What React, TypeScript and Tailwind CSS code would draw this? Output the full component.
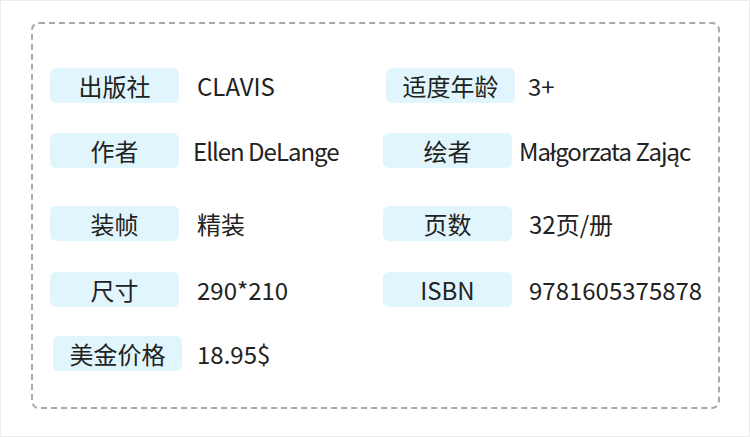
const rows = [
  {
    top: 'mt-[44px]',
    left: { label: '出版社', value: 'CLAVIS', labelPos: '', gap: 'ml-[18px]', track: '' },
    right: { label: '适度年龄', value: '3+', labelPos: 'ml-[3px]', gap: 'ml-[13px]', track: '' },
  },
  {
    top: 'mt-[30px]',
    left: { label: '作者', value: 'Ellen DeLange', labelPos: '', gap: 'ml-[14px]', track: 'tracking-[-1px]' },
    right: { label: '绘者', value: 'Małgorzata Zając', labelPos: '', gap: 'ml-[7px]', track: 'tracking-[-1px]' },
  },
  {
    top: 'mt-[38px]',
    left: { label: '装帧', value: '精装', labelPos: '', gap: 'ml-[18px]', track: '' },
    right: { label: '页数', value: '32页/册', labelPos: '', gap: 'ml-[17px]', track: '' },
  },
  {
    top: 'mt-[31px]',
    left: { label: '尺寸', value: '290*210', labelPos: '', gap: 'ml-[18px]', track: '' },
    right: { label: 'ISBN', value: '9781605375878', labelPos: '', gap: 'ml-[17px]', track: '' },
  },
  {
    top: 'mt-[29px]',
    left: { label: '美金价格', value: '18.95$', labelPos: 'ml-[3px]', gap: 'ml-[15px]', track: '' },
    right: null,
  },
];

type Cell = { label: string; value: string; labelPos: string; gap: string; track: string };

const Field = ({ cell }: { cell: Cell }) => (
  <div className="flex items-center">
    <div
      className={`${cell.labelPos} w-[129px] h-[35px] shrink-0 rounded-md bg-[#e1f6fc] flex items-center justify-center text-[24px] leading-none text-[#222]`}
    >
      {cell.label}
    </div>
    <div className={`${cell.gap} ${cell.track} text-[24px] leading-none text-[#222] whitespace-nowrap`}>
      {cell.value}
    </div>
  </div>
);

export default function App() {
  return (
    <div
      className="w-[750px] h-[437px] bg-white border border-[#ececec] overflow-hidden"
      style={{ fontFamily: '"Noto Sans CJK SC", "Noto Sans", sans-serif' }}
    >
      <div className="ml-[30px] mt-[21px] w-[689px] h-[387px] border-2 border-dashed border-[#a9a9a9] rounded-lg pl-[17px]">
        {rows.map((row, i) => (
          <div key={i} className={`${row.top} grid grid-cols-[333px_1fr]`}>
            <Field cell={row.left} />
            {row.right ? <Field cell={row.right} /> : <div />}
          </div>
        ))}
      </div>
    </div>
  );
}
